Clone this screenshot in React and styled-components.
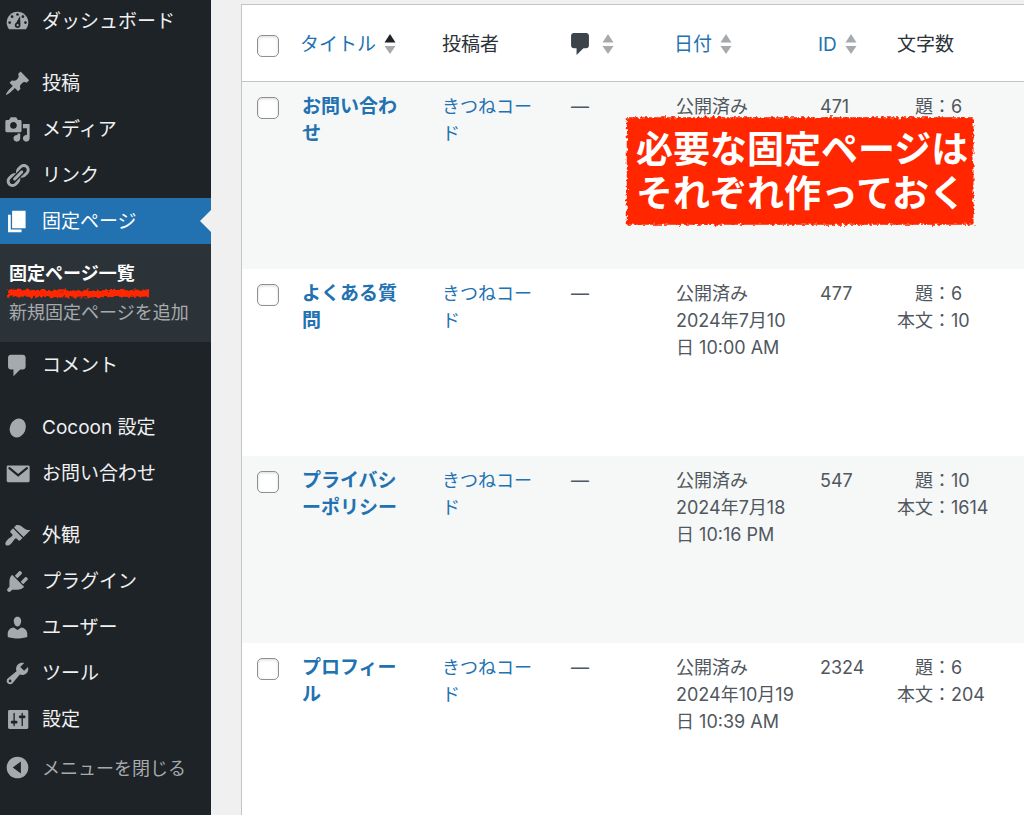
import React from 'react'
import styled, { createGlobalStyle } from 'styled-components'

const GlobalStyle = createGlobalStyle`
    * {
        box-sizing: border-box;
    }
    body {
        margin: 0;
        overflow: hidden;
        background: #f0f0f1;
        color: #50575e;
        font-family: Inter, "Noto Sans CJK JP", sans-serif;
        font-size: 18px;
        line-height: 27px;
    }
    a {
        color: #2271b1;
        text-decoration: none;
    }
`

const Page = styled.div`
    display: flex;
    height: 100vh;
    overflow: hidden;
`

const Sidebar = styled.nav`
    flex: 0 0 211px;
    background: #1d2327;
`

const Menu = styled.ul`
    list-style: none;
    margin: -2px 0 0;
    padding: 0;
`

const MenuItem = styled.li`
    margin-top: ${({ $gap }) => ($gap ? '16px' : '0')};
`

const MenuLink = styled.a`
    position: relative;
    display: flex;
    align-items: center;
    gap: 11px;
    height: 46px;
    padding-left: 4px;
    font-size: 19px;
    color: ${({ $current }) => ($current ? '#fff' : '#f0f0f1')};
    background: ${({ $current }) => ($current ? '#2271b1' : 'transparent')};

    svg {
        color: ${({ $current }) => ($current ? '#fff' : '#a7aaad')};
    }

    &::after {
        content: '';
        display: ${({ $current }) => ($current ? 'block' : 'none')};
        position: absolute;
        right: 0;
        top: 12px;
        border: 11px solid transparent;
        border-left-width: 0;
        border-right-color: #f0f0f1;
    }
`

const Collapse = styled.button`
    display: flex;
    align-items: center;
    gap: 11px;
    width: 100%;
    height: 46px;
    margin-top: 2px;
    padding: 0 0 0 4px;
    border: 0;
    background: none;
    color: #a7aaad;
    font-family: inherit;
    font-size: 18px;
`

const Icon = styled.svg`
    flex: none;
    width: 27px;
    height: 27px;
    fill: currentColor;
`

const SubMenu = styled.ul`
    list-style: none;
    margin: 0;
    padding: 10px 0;
    background: #2c3338;
`

const SubItem = styled.li`
    position: relative;

    a {
        display: block;
        padding: 6px 9px;
        font-size: 18px;
        color: ${({ $current }) => ($current ? '#fff' : '#a7aaad')};
        font-weight: ${({ $current }) => ($current ? 700 : 400)};
    }
`

const Scribble = styled.svg`
    position: absolute;
    left: 4px;
    bottom: -8px;
    width: 150px;
    height: 16px;
`

const Content = styled.main`
    position: relative;
    flex: 1;
    min-width: 0;
    padding: 4px 0 0 30px;
`

const Table = styled.table`
    width: 100%;
    table-layout: fixed;
    border-collapse: separate;
    border-spacing: 0;
    border: 1px solid #c3c4c7;
    border-right: 0;
    background: #fff;
    line-break: anywhere;
`

const Col = styled.col`
    width: ${({ $width }) => $width};
`

const HeadCell = styled.th`
    height: 77px;
    padding: 2px 9px 0;
    border-bottom: 1px solid #c3c4c7;
    text-align: left;
    vertical-align: middle;
    font-size: 19px;
    font-weight: 400;
    color: #2c3338;
`

const PlainHeadCell = styled(HeadCell)`
    padding-left: 11px;
`

const HeadLabel = styled.span`
    display: flex;
    align-items: center;
    gap: ${({ $wide }) => ($wide ? '13px' : '8px')};
    white-space: nowrap;
`

const Sorter = styled.svg`
    flex: none;
    width: 12px;
    height: 22px;
    fill: #a7aaad;
`

const CommentMark = styled.svg`
    width: 18px;
    height: 22px;
    fill: #3c434a;
    display: block;
`

const Row = styled.tr`
    height: 187px;
    background: ${({ $striped }) => ($striped ? '#f6f7f7' : '#fff')};
`

const Cell = styled.td`
    padding: 11px;
    vertical-align: top;
`

const TitleCell = styled(Cell)`
    padding-right: 24px;
    font-size: 19px;
    font-weight: 700;
`

const Checkbox = styled.input`
    appearance: none;
    display: block;
    width: 22px;
    height: 22px;
    margin: 4px 0 0 4px;
    border: 1px solid #8c8f94;
    border-radius: 5px;
    background: #fff;
    box-shadow: inset 0 1px 3px rgba(0, 0, 0, .15);
`

const Note = styled.div`
    position: absolute;
    left: 414px;
    top: 115px;
    padding: 13px 7px 11px 11px;
    font-size: 37px;
    line-height: 44px;
    font-weight: 700;
    color: #fff;
    white-space: nowrap;

    svg {
        position: absolute;
        inset: 0;
        width: 100%;
        height: 100%;
        overflow: visible;
    }
    p {
        position: relative;
        margin: 0;
    }
`

const hole = '#1d2327'

const icons = {
    dashboard: (
        <g transform="translate(0 -1.2)">
            <path d="M3.76 17h12.48c1.14-1.44 1.76-3.18 1.76-5 0-4.42-3.58-8-8-8s-8 3.58-8 8c0 1.82.62 3.56 1.76 5z" />
            <g fill={hole}>
                <circle cx="10" cy="6" r="1" />
                <circle cx="6" cy="7.6" r="1" />
                <circle cx="14" cy="7.6" r="1" />
                <circle cx="4.2" cy="12" r="1" />
                <circle cx="15.9" cy="12" r="1" />
                <path d="M11.9 7.2l.3 6.6c.1 1.3-.9 2.2-2.1 2.2-1.3 0-2.3-1-2.1-2.3.1-.8.5-1.3 1.1-1.7z" />
            </g>
            <circle cx="10.1" cy="13.9" r=".8" />
        </g>
    ),
    post: <path d="M10.44 3.02l1.82-1.82 6.36 6.35-1.83 1.82c-1.05-.68-2.48-.57-3.41.36l-.75.75c-.92.93-1.04 2.35-.35 3.41l-1.83 1.82-2.41-2.41-2.8 2.79c-.42.42-3.38 2.71-3.8 2.29s1.86-3.39 2.28-3.81l2.79-2.79L4.1 9.36l1.83-1.82c1.05.69 2.48.57 3.4-.36l.75-.75c.93-.92 1.05-2.35.36-3.41z" />,
    media: <path d="M13 11V4c0-.55-.45-1-1-1h-1.67L9 1H5L3.67 3H2c-.55 0-1 .45-1 1v7c0 .55.45 1 1 1h10c.55 0 1-.45 1-1zM7 4.5c1.38 0 2.5 1.12 2.5 2.5S8.38 9.5 7 9.5 4.5 8.38 4.5 7 5.62 4.5 7 4.5zM14 6h5v10.5c0 1.38-1.12 2.5-2.5 2.5S14 17.88 14 16.5s1.12-2.5 2.5-2.5c.17 0 .34.02.5.05V9h-3V6zm-4 8.05V13h2v3.5c0 1.38-1.12 2.5-2.5 2.5S7 17.88 7 16.5 8.12 14 9.5 14c.17 0 .34.02.5.05z" />,
    link: <path d="M17.74 2.76c1.68 1.69 1.68 4.41 0 6.1l-1.53 1.52c-1.12 1.12-2.7 1.47-4.14 1.09l2.62-2.61.76-.77.76-.76c.84-.84.84-2.2 0-3.04-.84-.85-2.2-.85-3.04 0l-.77.76-3.38 3.38c-.37-1.44-.02-3.02 1.1-4.14l1.52-1.53c1.69-1.68 4.42-1.68 6.1 0zM8.59 13.43l5.34-5.34c.42-.42.42-1.1 0-1.52-.44-.43-1.13-.39-1.53 0l-5.33 5.34c-.42.42-.42 1.1 0 1.52.44.43 1.13.39 1.52 0zm-.76 2.29l4.14-4.15c.38 1.44.03 3.02-1.09 4.14l-1.52 1.53c-1.69 1.68-4.41 1.68-6.1 0-1.68-1.68-1.68-4.42 0-6.1l1.53-1.52c1.12-1.12 2.7-1.47 4.14-1.1l-4.14 4.15c-.85.84-.85 2.2 0 3.05.84.84 2.2.84 3.04 0z" />,
    page: <path d="M6 15V2h10v13H6zm-1 1h8v2H3V5h2v11z" />,
    comment: <path d="M5 2h9c1.1 0 2 .9 2 2v7c0 1.1-.9 2-2 2h-2l-5 5v-5H5c-1.1 0-2-.9-2-2V4c0-1.1.9-2 2-2z" />,
    cocoon: <ellipse cx="10.2" cy="10.4" rx="5.8" ry="7.2" transform="rotate(22 10.2 10.4)" />,
    mail: (
        <>
            <rect x="2" y="4" width="17" height="12.400" rx="1" />
            <path d="M4 6l6.5 5.4L17 6" fill="none" stroke={hole} strokeWidth="1.6" strokeLinecap="round" />
        </>
    ),
    appearance: <path d="M14.48 11.06L7.41 3.99l1.5-1.5c.5-.56 2.3-.47 3.51.32 1.21.8 1.43 1.28 2.91 2.1 1.18.64 2.45 1.26 4.45.85zm-.71.71L6.7 4.7 4.93 6.47c-.39.39-.39 1.02 0 1.41l1.06 1.06c.39.39.39 1.03 0 1.42-.6.6-1.43 1.11-2.21 1.69-.35.26-.7.53-1.01.84C1.43 14.23.4 16.08 1.4 17.07c.99 1 2.84-.03 4.18-1.36.31-.31.58-.66.85-1.02.57-.78 1.08-1.61 1.69-2.21.39-.39 1.02-.39 1.41 0l1.06 1.06c.39.39 1.02.39 1.41 0z" />,
    plugin: <path d="M13.11 4.36L9.87 7.6 8 5.73l3.24-3.24c.35-.34 1.05-.2 1.56.32.52.51.66 1.21.31 1.55zm-8 1.77l.91-1.12 9.01 9.01-1.19.84c-.71.71-2.63 1.16-3.82 1.16H6.14L4.9 17.26c-.59.59-1.54.59-2.12 0-.59-.58-.59-1.53 0-2.12l1.24-1.24v-3.88c0-1.13.4-3.19 1.09-3.89zm7.26 3.97l3.24-3.24c.34-.35 1.04-.21 1.55.31.52.51.66 1.21.31 1.55l-3.24 3.25z" />,
    user: <path d="M10 9.25c-2.27 0-2.73-3.44-2.73-3.44C7 4.02 7.82 2 9.97 2c2.16 0 2.98 2.02 2.71 3.81 0 0-.41 3.44-2.68 3.44zm0 2.57L12.72 10c2.39 0 4.52 2.33 4.52 4.53v2.49s-3.65 1.13-7.24 1.13c-3.65 0-7.24-1.13-7.24-1.13v-2.49c0-2.25 1.94-4.48 4.47-4.48z" />,
    tool: <path d="M16.68 9.77c-1.34 1.34-3.3 1.67-4.95.99l-5.41 6.52c-.99.99-2.59.99-3.58 0s-.99-2.59 0-3.57l6.52-5.42c-.68-1.65-.35-3.61.99-4.95 1.28-1.28 3.12-1.62 4.72-1.06l-2.89 2.89 2.82 2.82 2.86-2.87c.53 1.58.18 3.39-1.08 4.65zM3.81 16.21c.4.39 1.04.39 1.43 0 .4-.4.4-1.04 0-1.43-.39-.4-1.03-.4-1.43 0-.39.39-.39 1.03 0 1.43z" />,
    settings: (
        <>
            <rect x="3" y="3" width="15" height="14" rx="1" />
            <path
                fill={hole}
                d="M8 11h1c.55 0 1 .45 1 1s-.45 1-1 1H8v1.5c0 .28-.22.5-.5.5s-.5-.22-.5-.5V13H6c-.55 0-1-.45-1-1s.45-1 1-1h1V5.5c0-.28.22-.5.5-.5s.5.22.5.5V11zm5-2h-1c-.55 0-1-.45-1-1s.45-1 1-1h1V5.5c0-.28.22-.5.5-.5s.5.22.5.5V7h1c.55 0 1 .45 1 1s-.45 1-1 1h-1v5.5c0 .28-.22.5-.5.5s-.5-.22-.5-.5V9z"
            />
        </>
    ),
    collapse: (
        <>
            <circle cx="10" cy="10" r="8" />
            <path d="M12.5 5.500v9L6.5 10z" fill={hole} />
        </>
    ),
}

const menu = [
    { label: 'ダッシュボード', icon: 'dashboard' },
    { label: '投稿', icon: 'post', gap: true },
    { label: 'メディア', icon: 'media' },
    { label: 'リンク', icon: 'link' },
    { label: '固定ページ', icon: 'page', current: true },
    { label: 'コメント', icon: 'comment' },
    { label: 'Cocoon 設定', icon: 'cocoon', gap: true },
    { label: 'お問い合わせ', icon: 'mail' },
    { label: '外観', icon: 'appearance', gap: true },
    { label: 'プラグイン', icon: 'plugin' },
    { label: 'ユーザー', icon: 'user' },
    { label: 'ツール', icon: 'tool' },
    { label: '設定', icon: 'settings' },
]

const pages = [
    { id: 471, title: 'お問い合わせ', date: '', titleCount: 6, bodyCount: null },
    { id: 477, title: 'よくある質問', date: '2024年7月10日 10:00 AM', titleCount: 6, bodyCount: 10 },
    { id: 547, title: 'プライバシーポリシー', date: '2024年7月18日 10:16 PM', titleCount: 10, bodyCount: 1614 },
    { id: 2324, title: 'プロフィール', date: '2024年10月19日 10:39 AM', titleCount: 6, bodyCount: 204 },
]

function MenuIcon({ name }) {
    return <Icon viewBox="0 0 20 20" aria-hidden="true">{icons[name]}</Icon>
}

function SortArrows({ active }) {
    return (
        <Sorter viewBox="0 0 12 22" aria-hidden="true">
            <path d="M6 1l5.5 8.5H.5z" fill={active ? '#1d2327' : undefined} />
            <path d="M6 21l5.5-8H.5z" />
        </Sorter>
    )
}

// Roughens the edge of whatever it is applied to, like a crayon stroke
function RoughFilter({ id, seed }) {
    return (
        <filter id={id} x="-5%" y="-50%" width="110%" height="200%" colorInterpolationFilters="sRGB">
            <feTurbulence type="fractalNoise" baseFrequency="0.3" numOctaves="2" seed={seed} />
            <feDisplacementMap in="SourceGraphic" scale="6" xChannelSelector="R" yChannelSelector="G" />
        </filter>
    )
}

function SideMenu() {
    return (
        <Sidebar>
            <Menu>
                {menu.map(({ label, icon, gap, current }) => (
                    <MenuItem key={label} $gap={gap}>
                        <MenuLink href="#" $current={current}>
                            <MenuIcon name={icon} />
                            {label}
                        </MenuLink>
                        {current && (
                            <SubMenu>
                                <SubItem $current>
                                    <a href="#">固定ページ一覧</a>
                                    <Scribble viewBox="0 0 150 16" aria-hidden="true">
                                        <RoughFilter id="rough-line" seed="4" />
                                        <path d="M4 4.5l70 1 71-1v7l-71 1-70-1z" fill="#ff2600" filter="url(#rough-line)" />
                                    </Scribble>
                                </SubItem>
                                <SubItem>
                                    <a href="#">新規固定ページを追加</a>
                                </SubItem>
                            </SubMenu>
                        )}
                    </MenuItem>
                ))}
            </Menu>
            <Collapse type="button">
                <MenuIcon name="collapse" />
                メニューを閉じる
            </Collapse>
        </Sidebar>
    )
}

function PageTable() {
    return (
        <Table>
            <colgroup>
                <Col $width="49px" />
                <Col $width="140px" />
                <Col $width="129px" />
                <Col $width="105px" />
                <Col $width="144px" />
                <Col $width="77px" />
                <Col $width="auto" />
            </colgroup>
            <thead>
                <tr>
                    <PlainHeadCell><Checkbox type="checkbox" aria-label="すべて選択" /></PlainHeadCell>
                    <HeadCell>
                        <HeadLabel><a href="#">タイトル</a><SortArrows active /></HeadLabel>
                    </HeadCell>
                    <PlainHeadCell>投稿者</PlainHeadCell>
                    <PlainHeadCell>
                        <HeadLabel $wide>
                            <a href="#" aria-label="コメント">
                                <CommentMark viewBox="3 2 13 16">{icons.comment}</CommentMark>
                            </a>
                            <SortArrows />
                        </HeadLabel>
                    </PlainHeadCell>
                    <HeadCell>
                        <HeadLabel><a href="#">日付</a><SortArrows /></HeadLabel>
                    </HeadCell>
                    <HeadCell>
                        <HeadLabel><a href="#">ID</a><SortArrows /></HeadLabel>
                    </HeadCell>
                    <PlainHeadCell>文字数</PlainHeadCell>
                </tr>
            </thead>
            <tbody>
                {pages.map((page, index) => (
                    <Row key={page.id} $striped={index % 2 === 0}>
                        <Cell><Checkbox type="checkbox" aria-label={page.title} /></Cell>
                        <TitleCell><a href="#">{page.title}</a></TitleCell>
                        <Cell><a href="#">きつねコード</a></Cell>
                        <Cell>—</Cell>
                        <Cell>公開済み<br />{page.date}</Cell>
                        <Cell>{page.id}</Cell>
                        <Cell>
                            {'\u3000'}題：{page.titleCount}
                            {page.bodyCount !== null && <><br />本文：{page.bodyCount}</>}
                        </Cell>
                    </Row>
                ))}
            </tbody>
        </Table>
    )
}

function App() {
    return (
        <>
            <GlobalStyle />
            <Page>
                <SideMenu />
                <Content>
                    <PageTable />
                    <Note>
                        <svg aria-hidden="true">
                            <RoughFilter id="rough-box" seed="9" />
                            <rect x="0.5%" y="2%" width="99%" height="96%" fill="#ff2600" filter="url(#rough-box)" />
                        </svg>
                        <p>必要な固定ページは<br />それぞれ作っておく</p>
                    </Note>
                </Content>
            </Page>
        </>
    )
}

export default App
